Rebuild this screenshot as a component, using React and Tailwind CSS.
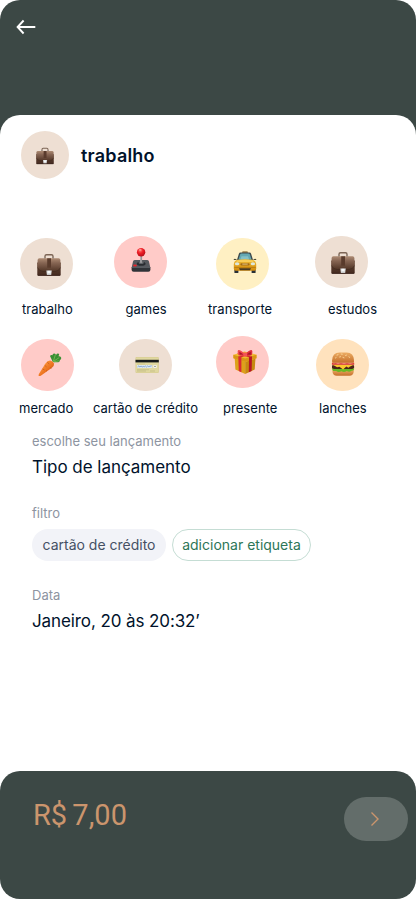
const svgBox = { viewBox: '0 0 24 24', fill: 'none', 'aria-hidden': true };

function Briefcase({ className }) {
  return (
    <svg {...svgBox} className={className}>
      <defs>
        <linearGradient id="leather" x1="0" y1="0" x2="0" y2="1">
          <stop offset="0" stopColor="#ad8b73" />
          <stop offset="0.35" stopColor="#866553" />
          <stop offset="1" stopColor="#503526" />
        </linearGradient>
        <linearGradient id="leatherBase" x1="0" y1="0" x2="0" y2="1">
          <stop offset="0" stopColor="#654634" />
          <stop offset="1" stopColor="#442a20" />
        </linearGradient>
      </defs>
      <path d="M8 5.5V3.2Q8 1.7 9.5 1.7H14.5Q16 1.7 16 3.2V5.5" stroke="#7c6555" strokeWidth="1.4" />
      <path d="M7.5 4.2V5.8M16.5 4.2V5.8" stroke="#98908a" strokeWidth="1.1" />
      <rect x="0.3" y="9" width="23.4" height="13.8" rx="1.2" fill="url(#leatherBase)" />
      <path d="M0.6 7Q0.7 5.3 2.4 5.3H21.6Q23.3 5.3 23.4 7V14.7Q22 18.2 18 18.5H6Q2 18.2 0.6 14.7Z" fill="url(#leather)" />
      <path d="M0.6 14.7Q2 18.2 6 18.5H18Q22 18.2 23.4 14.7" stroke="#3e281e" strokeWidth="0.6" />
      <path d="M10.2 5.3H14V14.7H10.2Z" fill="#593b2c" />
      <path d="M9.3 17.4H14.8L14.2 22H9.9Z" fill="#d5d7d8" />
      <path d="M10.6 17.8H13.5V20.2H10.6Z" fill="#f7f8f8" />
      <path d="M0.8 22.4H23.2" stroke="#362018" strokeWidth="0.7" />
    </svg>
  );
}

function Joystick({ className }) {
  return (
    <svg {...svgBox} className={className}>
      <defs>
        <radialGradient id="ball" cx="0.4" cy="0.3" r="0.7">
          <stop offset="0" stopColor="#ff7770" />
          <stop offset="0.45" stopColor="#ef2028" />
          <stop offset="1" stopColor="#b80c18" />
        </radialGradient>
      </defs>
      <path d="M4 13.5Q4.2 12 5.7 12H18.3Q19.8 12 20 13.5L21.4 20H2.6Z" fill="#55585d" />
      <path d="M2.6 19.3H21.4V21.8Q21.4 23.8 19.4 23.8H4.6Q2.6 23.8 2.6 21.8Z" fill="#303338" />
      <path d="M3 19.4H21" stroke="#74777c" strokeWidth="0.6" />
      <ellipse cx="12.2" cy="15.7" rx="4.4" ry="2" fill="#292c31" />
      <ellipse cx="12.2" cy="14.7" rx="2.7" ry="1.3" fill="#66696d" />
      <path d="M12.2 6.5V15" stroke="#8e8e91" strokeWidth="1.8" />
      <path d="M11.8 7V14.5" stroke="#c6c6c8" strokeWidth="0.6" />
      <circle cx="12.1" cy="4.2" r="4.2" fill="url(#ball)" />
      <ellipse cx="11.2" cy="1.9" rx="1.4" ry="0.7" fill="#ffaaa3" />
      <ellipse cx="6" cy="17.5" rx="1.9" ry="1.1" fill="#ed2229" />
    </svg>
  );
}

function Taxi({ className }) {
  return (
    <svg {...svgBox} className={className}>
      <defs>
        <linearGradient id="cab" x1="0" y1="0" x2="0" y2="1">
          <stop offset="0" stopColor="#f0bd39" />
          <stop offset="1" stopColor="#d38b0d" />
        </linearGradient>
      </defs>
      <path d="M9 3L9.5 1.3H14.5L15 3" fill="#9c8047" />
      <path d="M1.4 18H5.4V22.4Q5.4 23 4.7 23H2.1Q1.4 23 1.4 22.4ZM18.6 18H22.6V22.4Q22.6 23 21.9 23H19.3Q18.6 23 18.6 22.4Z" fill="#292f35" />
      <path d="M0.5 9.6Q1.7 8.2 3.2 9.3L4 10H1.1ZM23.5 9.6Q22.3 8.2 20.8 9.3L20 10H22.9Z" fill="#4e4b34" />
      <path d="M3.8 10.4L5.9 3.8Q6.2 2.4 7.6 2.4H16.4Q17.8 2.4 18.1 3.8L20.2 10.4Z" fill="#3d494d" />
      <path d="M5.5 9.8L7.1 4.6Q7.4 3.6 8.6 3.6H15.4Q16.6 3.6 16.9 4.6L18.5 9.8Z" fill="#64a8b2" />
      <path d="M7.2 9.8L8.5 6.2H15L16.2 9.8Z" fill="#86c1c5" />
      <path d="M4.4 9.7Q12 8.8 19.6 9.7Q22.8 10.8 23.2 14V18.3Q23.2 20.8 21.3 20.8H2.7Q0.8 20.8 0.8 18.3V14Q1.2 10.8 4.4 9.7Z" fill="url(#cab)" />
      <path d="M4.4 10.2Q12 9.1 19.6 10.2L20.6 12H3.4Z" fill="#f8ce59" />
      <ellipse cx="4.1" cy="13.7" rx="2.2" ry="1.5" fill="#dce8df" />
      <ellipse cx="19.9" cy="13.7" rx="2.2" ry="1.5" fill="#dce8df" />
      <rect x="7.4" y="13.2" width="9.2" height="2.2" rx="1" fill="#a36b16" />
      <rect x="9.3" y="13.6" width="5.4" height="1" fill="#e3c27b" />
      <path d="M1.2 17.4H22.8" stroke="#ad710b" strokeWidth="0.7" />
      <path d="M6 18.2H18L17 20.2H7Z" fill="#493a23" />
    </svg>
  );
}

function Carrot({ className }) {
  return (
    <svg {...svgBox} className={className}>
      <defs>
        <linearGradient id="carrotSkin" x1="0.2" y1="0.2" x2="0.8" y2="0.8">
          <stop offset="0" stopColor="#ff9a3d" />
          <stop offset="0.6" stopColor="#ed7420" />
          <stop offset="1" stopColor="#c85312" />
        </linearGradient>
      </defs>
      <path d="M14.7 8.7L12 3Q13 1.4 14.5 2.3Q14.5 0.3 16.3 0.4Q17.7 0.5 18 2Q19.5 -0.2 21.2 1.1L20.6 3.2Q23 2.9 23.2 4.8Q23.4 6.4 21.7 7Q22.4 8.8 20.4 9.2L15.9 9.3Z" fill="#398f32" />
      <path d="M15.3 8.5L17.3 2M15.5 8.4L21.2 4.6M15.8 8.8L20.8 7.8" stroke="#76ba51" strokeWidth="0.9" />
      <path d="M0.8 22.9Q0.2 22.4 0.9 20.9L7.3 10.7Q9.6 7.2 12.2 7.4Q15.5 8.2 16.1 10.8Q16.4 13.1 13.6 15.1L3.1 22.5Q1.7 23.4 0.8 22.9Z" fill="url(#carrotSkin)" />
      <path d="M9.3 9.3L11.2 10.9M6.8 12.4L8.5 13.8M12.1 14.6L13.4 15.3M4.7 16L6.5 17M8 17.5L9 18.1" stroke="#bd5418" strokeWidth="0.7" />
    </svg>
  );
}

function CreditCard({ className }) {
  return (
    <svg {...svgBox} className={className}>
      <rect x="0.5" y="4.1" width="23.3" height="15.9" rx="1" fill="#d6cb90" />
      <rect x="1" y="4.5" width="22.3" height="14.9" rx="0.7" fill="#e0d89f" />
      <path d="M0.5 6.8H23.8V9.4H0.5Z" fill="#15191a" />
      <path d="M2 11H10" stroke="#c1b67e" strokeWidth="0.5" />
      <rect x="2" y="12" width="15.3" height="3" fill="#dbe8f1" />
      <path d="M2.5 14Q4 11.7 4.8 14Q6.2 12.1 7.1 14Q8.3 13 9.3 13.8Q10.4 12.1 11.5 14Q12.6 12.2 13.6 13.6L16.7 12.8" stroke="#5c81ba" strokeWidth="0.6" />
      <rect x="18.1" y="12" width="3.8" height="3" rx="1" fill="#f2f1ec" />
      <path d="M19 13.4H21" stroke="#7d806f" strokeWidth="0.7" />
      <path d="M2 16.7H14M2 18H11M15 18H20" stroke="#bab17c" strokeWidth="0.6" />
    </svg>
  );
}

function Gift({ className }) {
  return (
    <svg {...svgBox} className={className}>
      <path d="M1.7 8L12.2 11.5V24L2.4 19.4Z" fill="#dda11a" />
      <path d="M12.2 11.5L22.5 8L21.7 19.4L12.2 24Z" fill="#c78910" />
      <path d="M0.4 4.7L11.5 1.6L23.5 4.7V8.3L12.2 12L0.4 8.3Z" fill="#f1bb31" />
      <path d="M0.4 4.7L12.2 8.4L23.5 4.7V8.3L12.2 12L0.4 8.3Z" fill="#d99517" />
      <path d="M5.3 6.2L8.4 7.2V22.2L5.8 21Z" fill="#db2833" />
      <path d="M16 7.2L19 6.2L18.6 20.9L15.8 22.2Z" fill="#b71526" />
      <path d="M5.3 6.2L16.5 2.9L19 3.6L8.4 7.2ZM5.5 3.3L19 6.2L16 7.2L4 3.7Z" fill="#d72731" />
      <path d="M12.2 4Q6.5 -0.9 5.1 0.2Q4.2 1.2 5.2 5Q8 6.3 12.2 5.1Z" fill="#f04950" />
      <path d="M12.2 4Q17.4 -0.9 18.9 0.2Q19.8 1.3 18.9 5Q16 6.3 12.2 5.1Z" fill="#df303c" />
      <path d="M6.4 1.8L10.6 4.4L6.5 4.8M17.7 1.8L13.7 4.4L17.8 4.8" fill="#a91525" />
      <rect x="10.4" y="2.5" width="3.7" height="4" rx="1.2" fill="#f35357" />
    </svg>
  );
}

function Burger({ className }) {
  return (
    <svg {...svgBox} className={className}>
      <defs>
        <linearGradient id="bun" x1="0" y1="0" x2="0" y2="1">
          <stop offset="0" stopColor="#edae65" />
          <stop offset="1" stopColor="#c56f2b" />
        </linearGradient>
      </defs>
      <path d="M1.5 17.5H22.7V20Q22.2 23.7 18.5 23.7H5.7Q2 23.7 1.5 20Z" fill="url(#bun)" />
      <path d="M0.8 16.4Q3.2 15.2 5.5 16.7Q8 15.4 10.3 17Q12.5 15.6 15 17Q17.4 15.4 19.5 16.6Q22 15.5 23.3 16.8Q23 19.1 20.5 18.8Q18.4 20.7 15.8 19.1Q12.9 20.9 10.4 19.2Q7.5 20.8 5.2 18.9Q1.5 19.8 0.8 16.4Z" fill="#68b824" />
      <path d="M1 14Q1.3 12.7 3 12.7H21Q22.8 12.7 23.1 14V15.3Q23 17 21 17H3Q1 17 1 15.3Z" fill="#4c2419" />
      <path d="M1.1 12.7H23L19 14.6L17.4 15.7L15.3 14.6L12.1 17.5L8.4 14.8L6.1 15.2L4 14Z" fill="#fbc92d" />
      <path d="M0.9 10.7H23.2V12.8H0.9Z" fill="#db4037" />
      <path d="M1.4 10.2Q2.5 11.5 4.7 10.7L7 11.5L10 10.7L13 11.5L16 10.7L19 11.4L22.8 10.5" stroke="#f59c91" strokeWidth="0.8" />
      <path d="M1.1 10.2V8.3Q1.4 0.4 8.5 0.4H15.7Q22.7 0.4 23 8.3V10.2Q22.5 10.8 20.8 10.8H3.3Q1.6 10.8 1.1 10.2Z" fill="url(#bun)" />
      <path d="M6 3.1L7 2.7M10.2 2L11.3 2.2M14.6 3.5L15.5 3.1M17.9 4.9L18.7 5.4M8.6 5L9.6 4.7M4.4 6L5.1 5.6M12 5.5L13 5.8" stroke="#ffe0a3" strokeWidth="0.8" strokeLinecap="round" />
    </svg>
  );
}

const rows = [
  [
    { name: 'trabalho', Icon: Briefcase, circle: 'ml-5 mt-0.5 bg-[#eedfd3]', icon: 'ml-[17px] mt-[15px]', label: 'ml-[22px] tracking-[0.05px]' },
    { name: 'games', Icon: Joystick, circle: 'ml-[22px] bg-[#ffcbc8]', icon: 'ml-[15px] mt-3', label: 'ml-[33.5px]' },
    { name: 'transporte', Icon: Taxi, circle: 'ml-3 mt-0.5 bg-[#fff0c3]', icon: 'ml-[17px] mt-3', label: 'ml-1 tracking-[0.07px]' },
    { name: 'estudos', Icon: Briefcase, circle: 'ml-[11px] bg-[#eedfd3]', icon: 'ml-4 mt-[15px]', label: 'ml-6' },
  ],
  [
    { name: 'mercado', Icon: Carrot, circle: 'ml-[21px] mt-[3px] bg-[#ffcbc8]', icon: 'ml-[17px] mt-3.5', label: 'ml-[19px]' },
    { name: 'cartão de crédito', Icon: CreditCard, circle: 'ml-[26.5px] mt-[3px] bg-[#eedfd3]', icon: 'ml-4 mt-3.5', label: 'ml-px' },
    { name: 'presente', Icon: Gift, circle: 'ml-3 bg-[#ffcbc8]', icon: 'ml-[17px] mt-3.5', label: 'ml-[19px] tracking-[0.05px]' },
    { name: 'lanches', Icon: Burger, circle: 'ml-3 mt-[3px] bg-[#ffe2bd]', icon: 'ml-[15px] mt-[13px]', label: 'ml-[15px]' },
  ],
];

function Category({ name, Icon, circle, icon, label }) {
  return (
    <button className="flex flex-col items-start">
      <span className="block h-[63px]">
        <span className={`flex h-[52px] w-[53px] items-start rounded-full ${circle}`}>
          <Icon className={`size-6 shrink-0 ${icon}`} />
        </span>
      </span>
      <span className={`whitespace-nowrap text-[13px] leading-5 ${label}`}>{name}</span>
    </button>
  );
}

export default function App() {
  return (
    <div className="flex h-[899px] w-[416px] flex-col overflow-hidden bg-white font-['Inter',sans-serif] text-[#00122b]">
      <div className="rounded-t-[20px] bg-[#3c4845]">
        <header className="h-[115px] pl-4 pt-[18px]">
          <button aria-label="Voltar" className="block">
            <svg width="20" height="18" viewBox="0 0 20 18" fill="none" stroke="white" strokeWidth="1.9">
              <path d="M19.3 9H1.7M7.6 2.5L1.6 9L7.6 15.5" />
            </svg>
          </button>
        </header>
        <div className="flex h-[121px] items-start gap-3 rounded-t-[20px] bg-white pl-[21px] pt-4">
          <div className="flex size-12 items-center justify-center rounded-full bg-[#eedfd3]">
            <Briefcase className="mt-0.5 size-[18px]" />
          </div>
          <h1 className="mt-[11px] text-lg font-semibold leading-7 tracking-[0.2px]">trabalho</h1>
        </div>
      </div>

      <section className="h-[193px]">
        {rows.map((row, i) => (
          <div key={i} className="grid h-[100px] grid-cols-[92px_112px_100px_112px] items-start last:h-[93px] last:[&_.h-\[63px\]]:h-[62px]">
            {row.map((item) => <Category key={item.name} {...item} />)}
          </div>
        ))}
      </section>

      <main className="flex h-[342px] flex-col items-start px-8 pt-[2px]">
        <p className="text-[13px] leading-5 text-[#8d94a1]">escolhe seu lançamento</p>
        <p className="mt-1 text-[17px] leading-6 tracking-[-0.03px]">Tipo de lançamento</p>
        <p className="mt-6 text-[13px] leading-5 text-[#8d94a1]">filtro</p>
        <div className="mt-1.5 flex gap-1.5">
          <span className="flex h-8 w-[134px] items-center justify-center whitespace-nowrap rounded-full bg-[#f2f3f8] text-sm text-[#455064]">cartão de crédito</span>
          <button className="flex h-8 w-[139px] items-center justify-center whitespace-nowrap rounded-full border border-[#c5ddd4] text-sm text-[#2d7657]">adicionar etiqueta</button>
        </div>
        <p className="mt-6 text-[13px] leading-5 text-[#8d94a1]">Data</p>
        <p className="mt-1 text-[17px] leading-6 tracking-[-0.1px]">Janeiro, 20 às 20:32’</p>
      </main>

      <footer className="flex h-32 items-start justify-between rounded-[20px] bg-[#3c4845] pl-[33px] pr-2 pt-[26px]">
        <p className="font-['Roboto',sans-serif] text-[29px] leading-9 text-[#cb956d] [word-spacing:-2px]">R$ 7,00</p>
        <button aria-label="Continuar" className="flex h-11 w-16 items-center justify-center rounded-full bg-[#636d6a]">
          <svg width="10" height="16" viewBox="0 0 10 16" fill="none" stroke="#cb956d" strokeWidth="1.4" className="ml-[-2px]">
            <path d="M1.5 1.5L8 8L1.5 14.5" />
          </svg>
        </button>
      </footer>
    </div>
  );
}
